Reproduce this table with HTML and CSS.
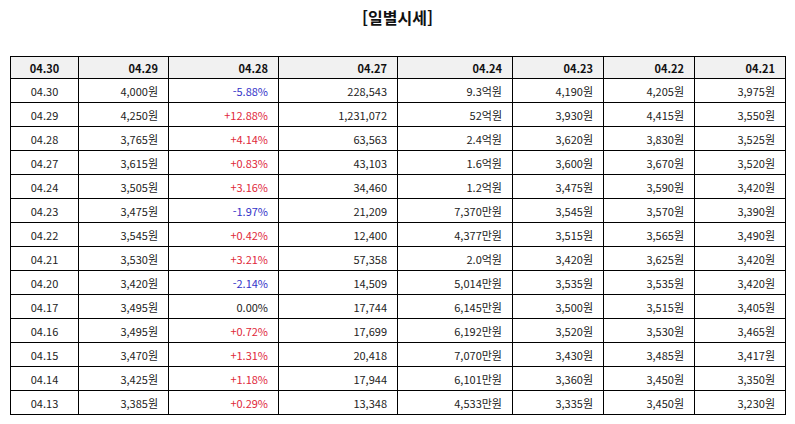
FILE: index.html
```html
<!DOCTYPE html>
<html lang="ko">
<head>
<meta charset="utf-8">
<title>일별시세</title>
<link rel="stylesheet" href="styles.css">
</head>
<body>
<h3 class="title">[일별시세]</h3>
<table class="daily">
<colgroup>
<col class="c1"><col class="c2"><col class="c3"><col class="c4"><col class="c5"><col class="c6"><col class="c7"><col class="c8">
</colgroup>
<thead>
<tr><th class="ctr">04.30</th><th>04.29</th><th>04.28</th><th>04.27</th><th>04.24</th><th>04.23</th><th>04.22</th><th>04.21</th></tr>
</thead>
<tbody>
<tr><td class="ctr">04.30</td><td>4,000원</td><td class="dn">-5.88%</td><td>228,543</td><td>9.3억원</td><td>4,190원</td><td>4,205원</td><td>3,975원</td></tr>
<tr><td class="ctr">04.29</td><td>4,250원</td><td class="up">+12.88%</td><td>1,231,072</td><td>52억원</td><td>3,930원</td><td>4,415원</td><td>3,550원</td></tr>
<tr><td class="ctr">04.28</td><td>3,765원</td><td class="up">+4.14%</td><td>63,563</td><td>2.4억원</td><td>3,620원</td><td>3,830원</td><td>3,525원</td></tr>
<tr><td class="ctr">04.27</td><td>3,615원</td><td class="up">+0.83%</td><td>43,103</td><td>1.6억원</td><td>3,600원</td><td>3,670원</td><td>3,520원</td></tr>
<tr><td class="ctr">04.24</td><td>3,505원</td><td class="up">+3.16%</td><td>34,460</td><td>1.2억원</td><td>3,475원</td><td>3,590원</td><td>3,420원</td></tr>
<tr><td class="ctr">04.23</td><td>3,475원</td><td class="dn">-1.97%</td><td>21,209</td><td>7,370만원</td><td>3,545원</td><td>3,570원</td><td>3,390원</td></tr>
<tr><td class="ctr">04.22</td><td>3,545원</td><td class="up">+0.42%</td><td>12,400</td><td>4,377만원</td><td>3,515원</td><td>3,565원</td><td>3,490원</td></tr>
<tr><td class="ctr">04.21</td><td>3,530원</td><td class="up">+3.21%</td><td>57,358</td><td>2.0억원</td><td>3,420원</td><td>3,625원</td><td>3,420원</td></tr>
<tr><td class="ctr">04.20</td><td>3,420원</td><td class="dn">-2.14%</td><td>14,509</td><td>5,014만원</td><td>3,535원</td><td>3,535원</td><td>3,420원</td></tr>
<tr><td class="ctr">04.17</td><td>3,495원</td><td>0.00%</td><td>17,744</td><td>6,145만원</td><td>3,500원</td><td>3,515원</td><td>3,405원</td></tr>
<tr><td class="ctr">04.16</td><td>3,495원</td><td class="up">+0.72%</td><td>17,699</td><td>6,192만원</td><td>3,520원</td><td>3,530원</td><td>3,465원</td></tr>
<tr><td class="ctr">04.15</td><td>3,470원</td><td class="up">+1.31%</td><td>20,418</td><td>7,070만원</td><td>3,430원</td><td>3,485원</td><td>3,417원</td></tr>
<tr><td class="ctr">04.14</td><td>3,425원</td><td class="up">+1.18%</td><td>17,944</td><td>6,101만원</td><td>3,360원</td><td>3,450원</td><td>3,350원</td></tr>
<tr><td class="ctr">04.13</td><td>3,385원</td><td class="up">+0.29%</td><td>13,348</td><td>4,533만원</td><td>3,335원</td><td>3,450원</td><td>3,230원</td></tr>
</tbody>
</table>
</body>
</html>
```
FILE: styles.css
```css
html, body {
  margin: 0;
  padding: 0;
  background: #ffffff;
}
body {
  padding: 0 10px;
  font-family: "Noto Sans CJK KR", "Noto Sans", sans-serif;
  color: #222222;
}
.title {
  margin: 0;
  padding-top: 6px;
  height: 56px;
  box-sizing: border-box;
  text-align: center;
  font-size: 16px;
  line-height: 22px;
  font-weight: bold;
  color: #111111;
}
.daily {
  border-collapse: collapse;
  table-layout: fixed;
  width: 775px;
  font-size: 11px;
}
.c1 { width: 68px; }
.c2 { width: 90px; }
.c3 { width: 110px; }
.c4 { width: 119px; }
.c5 { width: 115px; }
.c6 { width: 91px; }
.c7 { width: 91px; }
.c8 { width: 91px; }
.daily th,
.daily td {
  border: 1px solid #000000;
  padding: 0 10px 0 0;
  height: 23px;
  text-align: right;
  line-height: 14px;
  white-space: nowrap;
}
.daily th {
  background: #f1f1f1;
  font-weight: bold;
  color: #111111;
  height: 21px;
}
.daily .ctr {
  text-align: center;
  padding: 0;
}
.daily .up { color: #e0283a; }
.daily .dn { color: #3333c8; }
```
